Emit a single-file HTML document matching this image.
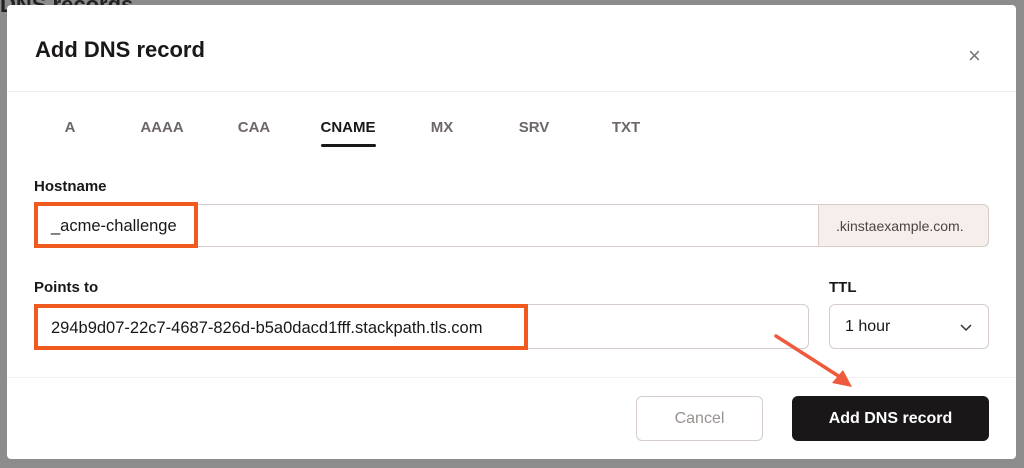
<!DOCTYPE html><html><head><style>
*{box-sizing:border-box;margin:0;padding:0}
body{width:1024px;height:468px;background:#8c8c8c;font-family:"Liberation Sans",sans-serif;position:relative;overflow:hidden;color:#1a1718}
.m{position:absolute;left:7px;top:5px;width:1009px;height:454px;background:#fff;border-radius:4px;overflow:hidden}
.a{position:absolute}
.t{position:absolute;top:114px;font-size:15px;font-weight:bold;color:#6e6767;transform:translateX(-50%)}
.lbl{position:absolute;font-size:15px;font-weight:bold}
.in{position:absolute;border:1px solid #d6cccc;border-radius:6px;background:#fff;font-size:16px}
</style></head><body>
<div class="a" style="left:0;top:-8px;font-size:22px;font-weight:bold;color:#222">DNS records</div>
<div class="m">
<div class="a" style="left:28px;top:32px;font-size:22px;font-weight:bold">Add DNS record</div>
<div class="a" style="left:961px;top:40px;font-size:22px;color:#777;line-height:22px">×</div>
<div class="a" style="left:0;top:86px;width:1009px;height:1px;background:#eee"></div>
<div class="t" style="left:63px">A</div>
<div class="t" style="left:155px">AAAA</div>
<div class="t" style="left:247px">CAA</div>
<div class="t" style="left:341px;color:#1a1718">CNAME</div>
<div class="t" style="left:435px">MX</div>
<div class="t" style="left:527px">SRV</div>
<div class="t" style="left:619px">TXT</div>
<div class="a" style="left:314px;top:139px;width:55px;height:3px;background:#1a1718;border-radius:2px"></div>
<div class="lbl" style="left:27px;top:173px">Hostname</div>
<div class="in" style="left:27px;top:199px;width:955px;height:43px"></div>
<div class="a" style="left:811px;top:199px;width:171px;height:43px;background:#f5eeeb;border:1px solid #d6cccc;border-radius:0 6px 6px 0;font-size:14px;color:#4a4444;padding:13px 0 0 17px">.kinstaexample.com.</div>
<div class="a" style="left:27px;top:197px;width:164px;height:46px;border:4px solid #f05a1e;font-size:16.5px;padding:11px 0 0 13px">_acme-challenge</div>
<div class="lbl" style="left:27px;top:274px">Points to</div>
<div class="lbl" style="left:822px;top:274px">TTL</div>
<div class="in" style="left:27px;top:299px;width:775px;height:45px"></div>
<div class="a" style="left:27px;top:299px;width:494px;height:46px;border:4px solid #f05a1e;font-size:16.5px;padding:11px 0 0 13px">294b9d07-22c7-4687-826d-b5a0dacd1fff.stackpath.tls.com</div>
<div class="in" style="left:822px;top:299px;width:160px;height:45px;padding:13px 0 0 15px">1 hour<svg class="a" style="left:130px;top:19px" width="12" height="8" viewBox="0 0 12 8"><path d="M1 1l5 5 5-5" fill="none" stroke="#333" stroke-width="1.5"/></svg></div>
<div class="a" style="left:0;top:372px;width:1009px;height:1px;background:#f2f2f2"></div>
<div class="a" style="left:629px;top:391px;width:127px;height:45px;border:1px solid #d6cccc;border-radius:6px;color:#9a9090;font-size:16px;text-align:center;line-height:43px">Cancel</div>
<div class="a" style="left:785px;top:391px;width:197px;height:45px;background:#1a1718;border-radius:6px;color:#fff;font-weight:bold;font-size:16px;text-align:center;line-height:45px">Add DNS record</div>
</div>
<svg class="a" style="left:0;top:0" width="1024" height="468"><path d="M776 336L840 377" stroke="#f05a3c" stroke-width="3.5" stroke-linecap="round"/><path d="M852 387L832 383L843 370Z" fill="#f05a3c"/></svg>
</body></html>
